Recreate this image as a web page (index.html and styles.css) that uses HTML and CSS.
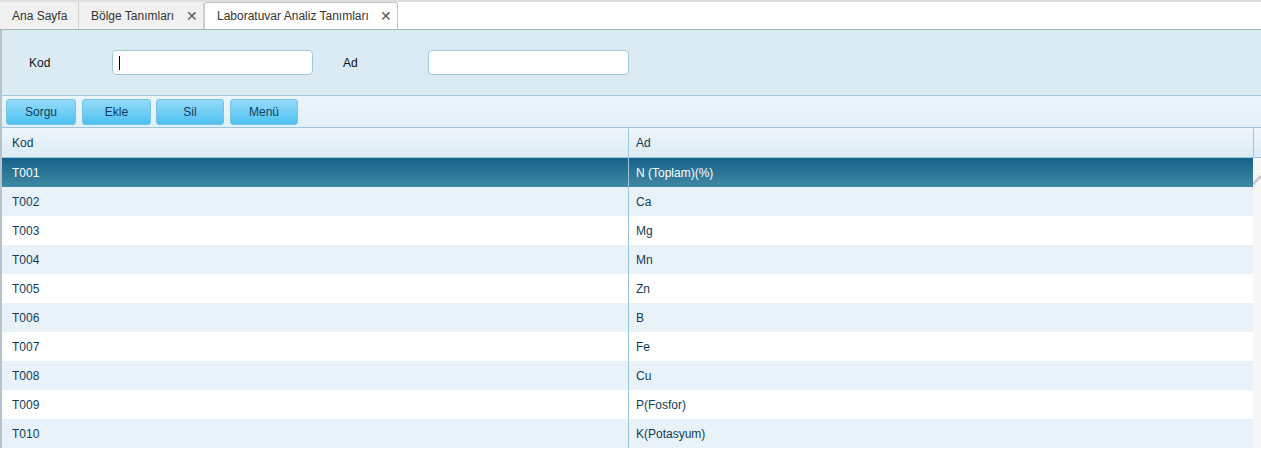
FILE: index.html
```html
<!DOCTYPE html>
<html lang="tr">
<head>
<meta charset="utf-8">
<title>Laboratuvar Analiz Tanımları</title>
<link rel="stylesheet" href="styles.css">
</head>
<body>
<div class="tabs">
  <div class="tab tab-home">Ana Sayfa</div>
  <div class="tab tab-bolge">Bölge Tanımları<span class="close">✕</span></div>
  <div class="tab active">Laboratuvar Analiz Tanımları<span class="close">✕</span></div>
</div>
<div class="content">
  <div class="search">
    <label class="lbl lbl-kod">Kod</label>
    <div class="field"><span class="caret"></span></div>
    <label class="lbl lbl-ad">Ad</label>
    <div class="field"></div>
  </div>
  <div class="toolbar">
    <button class="btn btn-sorgu">Sorgu</button>
    <button class="btn btn-ekle">Ekle</button>
    <button class="btn btn-sil">Sil</button>
    <button class="btn btn-menu">Menü</button>
  </div>
  <div class="grid">
    <div class="grid-main">
      <div class="row head"><div class="c1">Kod</div><div class="c2">Ad</div></div>
      <div class="row sel"><div class="c1">T001</div><div class="c2">N (Toplam)(%)</div></div>
      <div class="row alt"><div class="c1">T002</div><div class="c2">Ca</div></div>
      <div class="row"><div class="c1">T003</div><div class="c2">Mg</div></div>
      <div class="row alt"><div class="c1">T004</div><div class="c2">Mn</div></div>
      <div class="row"><div class="c1">T005</div><div class="c2">Zn</div></div>
      <div class="row alt"><div class="c1">T006</div><div class="c2">B</div></div>
      <div class="row"><div class="c1">T007</div><div class="c2">Fe</div></div>
      <div class="row alt"><div class="c1">T008</div><div class="c2">Cu</div></div>
      <div class="row"><div class="c1">T009</div><div class="c2">P(Fosfor)</div></div>
      <div class="row alt"><div class="c1">T010</div><div class="c2">K(Potasyum)</div></div>
    </div>
    <div class="scroll">
      <div class="scroll-head"></div>
      <div class="scroll-track">
        <svg class="grip" width="8" height="12" viewBox="0 0 8 12"><path d="M0 11 L8 3" stroke="#c8c8c8" stroke-width="2.5"/></svg>
      </div>
    </div>
  </div>
</div>
</body>
</html>
```
FILE: styles.css
```css
* { box-sizing: border-box; }
html, body { margin: 0; padding: 0; background: #fff; }
body {
  font-family: "Liberation Sans", Arial, sans-serif;
  font-size: 12px;
  color: #0e3d59;
  width: 1261px;
  height: 454px;
  overflow: hidden;
}

/* tabs */
.tabs {
  display: flex;
  height: 30px;
  border-top: 2px solid #dedede;
  border-bottom: 1px solid #a9b3ba;
  background: #fff;
}
.tab {
  display: flex;
  align-items: center;
  flex-shrink: 0;
  white-space: nowrap;
  padding: 0 12px;
  height: 27px;
  background: #f1f1f1;
  border-right: 1px solid #d3d3d3;
  color: #333;
  font-size: 12px;
}
.tab-home { width: 79px; }
.tab-bolge { width: 125px; padding-right: 5px; }
.tab.active {
  background: #fff;
  width: 194px;
  border: 1px solid #c2c8cc;
  border-bottom: none;
  border-radius: 3px 3px 0 0;
  height: 27px;
  padding-right: 5px;
}
.close {
  margin-left: auto;
  color: #555;
  font-size: 14px;
}

/* content */
.content {
  border-left: 2px solid #b7c3cb;
}
.search {
  display: flex;
  align-items: center;
  height: 66px;
  background: #daebf3;
  border-bottom: 1px solid #9dc6da;
}
.lbl {
  color: #111;
  font-size: 12px;
}
.lbl-kod { padding-left: 27px; width: 110px; }
.lbl-ad { padding-left: 30px; width: 115px; }
.field {
  width: 201px;
  height: 25px;
  background: #fff;
  border: 1px solid #a3c8da;
  border-radius: 4px;
  display: flex;
  align-items: center;
  padding-left: 6px;
}
.caret {
  display: block;
  width: 1px;
  height: 14px;
  background: #000;
}

.toolbar {
  display: flex;
  align-items: center;
  height: 32px;
  padding: 0 4px;
  background: linear-gradient(#ecf5fb, #e3eff7);
  border-bottom: 1px solid #9dc6da;
}
.btn {
  height: 26px;
  font-family: "Liberation Sans", Arial, sans-serif;
  font-size: 12px;
  color: #0e3d59;
  background: linear-gradient(#95dbf9, #4ec0f1);
  border: 1px solid #74c3e2;
  border-radius: 3px;
  padding: 0;
}
.btn-sorgu { width: 70px; }
.btn-ekle { width: 69px; margin-left: 6px; }
.btn-sil { width: 68px; margin-left: 5px; }
.btn-menu { width: 68px; margin-left: 6px; }

/* grid */
.grid {
  display: flex;
}
.grid-main {
  width: 1252px;
}
.row {
  display: flex;
  height: 29px;
  align-items: center;
  background: #fff;
}
.row.alt { background: #e9f2f9; }
.row.head {
  height: 30px;
  background: linear-gradient(#eef6fb, #dbebf4);
  border-bottom: 1px solid #9dc6da;
}
.row.sel {
  background: linear-gradient(#17628a, #4089a4);
  color: #fff;
}
.c1 {
  width: 627px;
  height: 100%;
  display: flex;
  align-items: center;
  padding-left: 10px;
  border-right: 1px solid #9cc6dc;
}
.c2 {
  flex: 1;
  padding-left: 7px;
}
.scroll {
  flex: 1;
  display: flex;
  flex-direction: column;
}
.scroll-head {
  height: 30px;
  background: linear-gradient(#eef6fb, #dbebf4);
  border-left: 1px solid #9dc6da;
  border-bottom: 1px solid #9dc6da;
}
.scroll-track {
  flex: 1;
  background: #f7f7f7;
  padding-top: 15px;
}
.grip { display: block; }
```
